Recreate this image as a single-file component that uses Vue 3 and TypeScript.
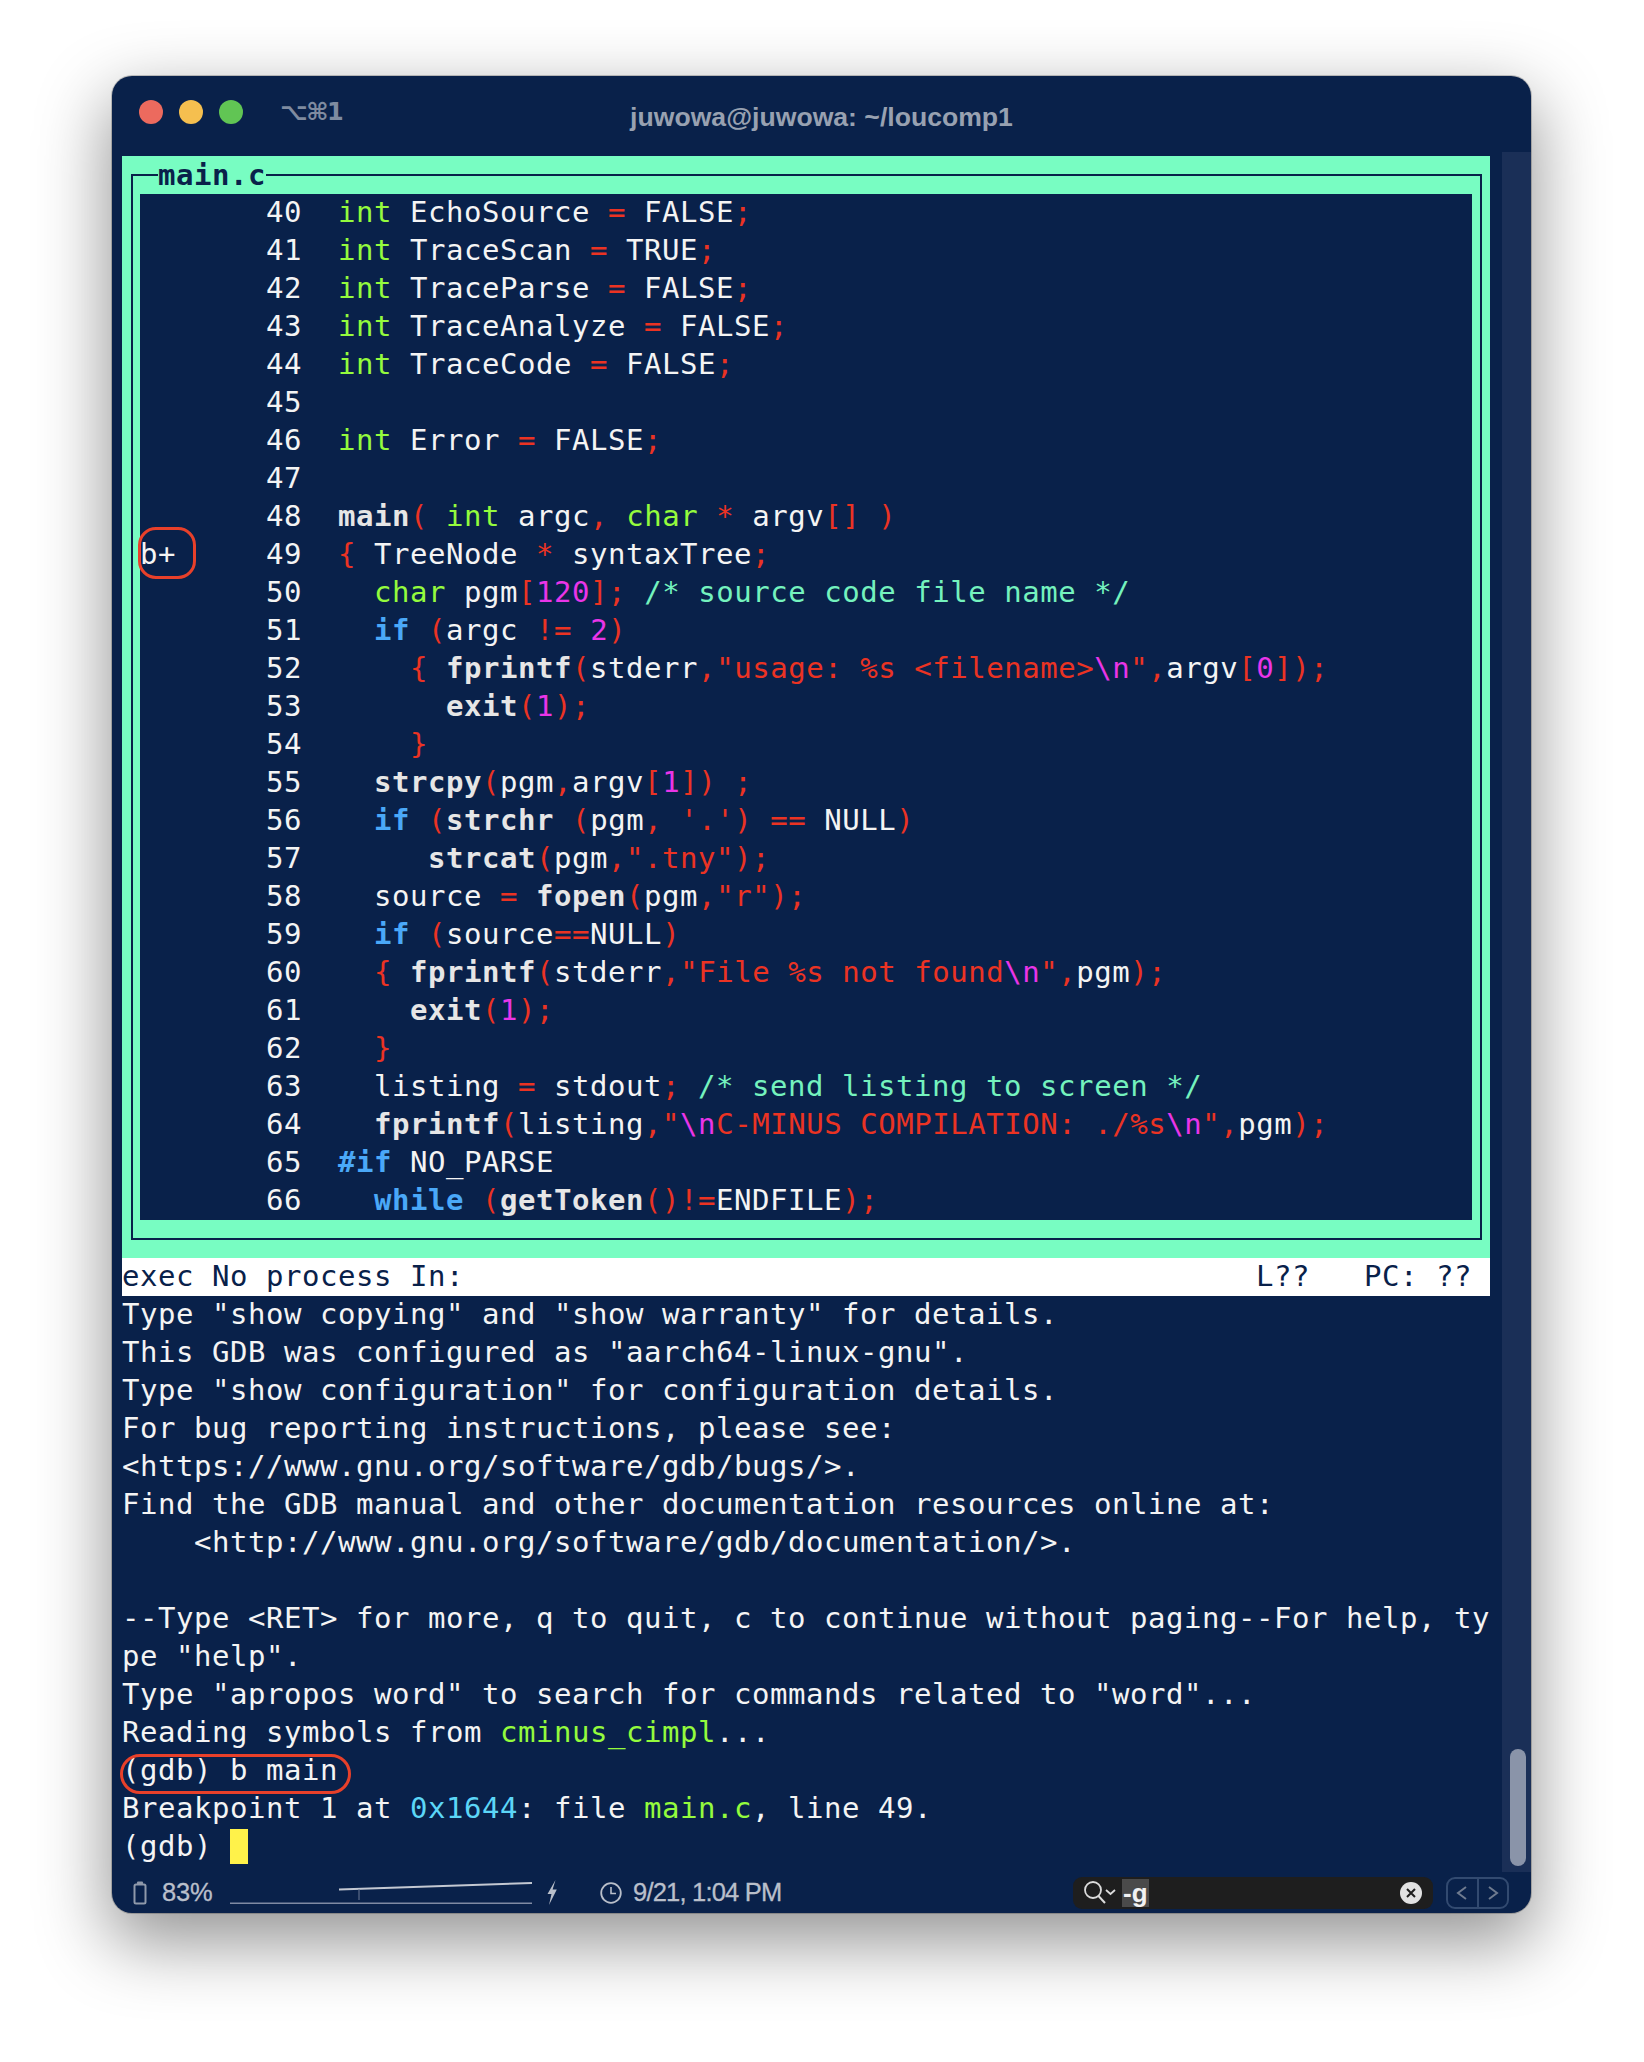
<script setup lang="ts">
type Token = { cls: string; text: string };

function parse(line: string): Token[] {
  const out: Token[] = [];
  const re = /«(\w):(.*?)»/g;
  let last = 0;
  let m: RegExpExecArray | null;
  while ((m = re.exec(line))) {
    if (m.index > last) out.push({ cls: "", text: line.slice(last, m.index) });
    out.push({ cls: "t-" + m[1], text: m[2] });
    last = m.index + m[0].length;
  }
  if (last < line.length) out.push({ cls: "", text: line.slice(last) });
  return out;
}

const source: string[] = [
  "       40  «g:int» EchoSource «r:=» FALSE«r:;»",
  "       41  «g:int» TraceScan «r:=» TRUE«r:;»",
  "       42  «g:int» TraceParse «r:=» FALSE«r:;»",
  "       43  «g:int» TraceAnalyze «r:=» FALSE«r:;»",
  "       44  «g:int» TraceCode «r:=» FALSE«r:;»",
  "       45  ",
  "       46  «g:int» Error «r:=» FALSE«r:;»",
  "       47  ",
  "       48  «f:main»«r:(» «g:int» argc«r:,» «g:char» «r:*» argv«r:[]» «r:)»",
  "b+     49  «r:{» TreeNode «r:*» syntaxTree«r:;»",
  "       50    «g:char» pgm«r:[»«m:120»«r:];» «c:/* source code file name */»",
  "       51    «b:if» «r:(»argc «r:!=» «m:2»«r:)»",
  "       52      «r:{» «f:fprintf»«r:(»stderr«r:,»«r:\"usage: %s <filename>»«m:\\n»«r:\"»«r:,»argv«r:[»«m:0»«r:]);»",
  "       53        «f:exit»«r:(»«m:1»«r:);»",
  "       54      «r:}»",
  "       55    «f:strcpy»«r:(»pgm«r:,»argv«r:[»«m:1»«r:])» «r:;»",
  "       56    «b:if» «r:(»«f:strchr» «r:(»pgm«r:,» «r:'.'»«r:)» «r:==» NULL«r:)»",
  "       57       «f:strcat»«r:(»pgm«r:,»«r:\".tny\"»«r:);»",
  "       58    source «r:=» «f:fopen»«r:(»pgm«r:,»«r:\"r\"»«r:);»",
  "       59    «b:if» «r:(»source«r:==»NULL«r:)»",
  "       60    «r:{» «f:fprintf»«r:(»stderr«r:,»«r:\"File %s not found»«m:\\n»«r:\"»«r:,»pgm«r:);»",
  "       61      «f:exit»«r:(»«m:1»«r:);»",
  "       62    «r:}»",
  "       63    listing «r:=» stdout«r:;» «c:/* send listing to screen */»",
  "       64    «f:fprintf»«r:(»listing«r:,»«r:\"»«m:\\n»«r:C-MINUS COMPILATION: ./%s»«m:\\n»«r:\"»«r:,»pgm«r:);»",
  "       65  «b:#if» NO_PARSE",
  "       66    «b:while» «r:(»«f:getToken»«r:()!=»ENDFILE«r:);»",
];

const gdb: string[] = [
  'Type "show copying" and "show warranty" for details.',
  'This GDB was configured as "aarch64-linux-gnu".',
  'Type "show configuration" for configuration details.',
  "For bug reporting instructions, please see:",
  "<https://www.gnu.org/software/gdb/bugs/>.",
  "Find the GDB manual and other documentation resources online at:",
  "    <http://www.gnu.org/software/gdb/documentation/>.",
  "",
  "--Type <RET> for more, q to quit, c to continue without paging--For help, ty",
  'pe "help".',
  'Type "apropos word" to search for commands related to "word"...',
  "Reading symbols from «g:cminus_cimpl»...",
  "(gdb) b main",
  "Breakpoint 1 at «y:0x1644»: file «g:main.c», line 49.",
  "(gdb) ",
];

const sourceRows = source.map(parse);
const gdbRows = gdb.map(parse);
const statusLeft = "exec No process In:";
const statusRight = "L??   PC: ??";
</script>

<template>
  <div class="page">
    <div class="window">
      <header class="titlebar">
        <div class="lights">
          <span class="light red"></span>
          <span class="light yellow"></span>
          <span class="light green"></span>
          <span class="shortcut">⌥⌘1</span>
        </div>
        <div class="title">juwowa@juwowa: ~/loucomp1</div>
        <div></div>
      </header>

      <div class="main">
        <div class="terminal">
          <section class="tui">
            <div class="frame"></div>
            <div class="frame-title">main.c</div>
            <div class="src">
              <div v-for="(row, i) in sourceRows" :key="i" class="row">
                <span v-for="(t, j) in row" :key="j" :class="t.cls">{{ t.text }}</span>
                <i v-if="i === 9" class="mark mark-bp"></i>
              </div>
            </div>
          </section>
          <div class="status row">
            <span>{{ statusLeft }}</span>
            <span>{{ statusRight }}</span>
          </div>
          <div class="gdb">
            <div v-for="(row, i) in gdbRows" :key="i" class="row">
              <span v-for="(t, j) in row" :key="j" :class="t.cls">{{ t.text }}</span>
              <i v-if="i === 12" class="mark mark-cmd"></i>
              <b v-if="i === 14" class="cursor"></b>
            </div>
          </div>
        </div>
        <div class="scrollbar"><div class="thumb"></div></div>
      </div>

      <footer class="bar">
        <svg class="battery" width="14" height="24" viewBox="0 0 14 24">
          <rect x="4" y="0.5" width="6" height="3" rx="1" fill="#8f99aa" />
          <rect x="1.5" y="3.5" width="11" height="19" rx="1.5" fill="none" stroke="#8f99aa" stroke-width="2" />
        </svg>
        <span class="bar-text pct">83%</span>
        <svg class="spark" width="302" height="24" viewBox="0 0 302 24">
          <path d="M0 22.2H302" stroke="#7f8aa3" stroke-width="1.6" fill="none" />
          <path d="M109 8.5L302 2" stroke="#c3c8d2" stroke-width="2" fill="none" />
          <path d="M129 8V19" stroke="#6d7b95" stroke-width="1" fill="none" />
        </svg>
        <svg class="bolt" width="10" height="25" viewBox="0 0 10 25">
          <path d="M8.5 0L0.5 14H4.5L2 25L9.8 9.5H5.6Z" fill="#b9bfca" />
        </svg>
        <svg class="clock" width="22" height="22" viewBox="0 0 22 22">
          <circle cx="11" cy="11" r="9.8" fill="none" stroke="#b9bfca" stroke-width="1.8" />
          <path d="M11 5V11.5H16" fill="none" stroke="#b9bfca" stroke-width="1.6" />
        </svg>
        <span class="bar-text time">9/21, 1:04 PM</span>

        <div class="search">
          <svg class="lens" width="40" height="28" viewBox="0 0 40 28">
            <circle cx="14" cy="11" r="8" fill="none" stroke="#dcdcdc" stroke-width="1.8" />
            <path d="M19.5 17L26 24" stroke="#dcdcdc" stroke-width="2" fill="none" />
            <path d="M27 11L31.5 15L36 11" stroke="#dcdcdc" stroke-width="1.8" fill="none" />
          </svg>
          <span class="query">-g</span>
          <span class="clear">
            <svg width="22" height="22" viewBox="0 0 22 22">
              <circle cx="11" cy="11" r="11" fill="#e2e2e2" />
              <path d="M7 7L15 15M15 7L7 15" stroke="#1e1e1e" stroke-width="2" fill="none" />
            </svg>
          </span>
        </div>

        <div class="nav">
          <span class="nav-btn">
            <svg width="12" height="16" viewBox="0 0 12 16"><path d="M10 2L2 8L10 14" fill="none" stroke="#6f7b8f" stroke-width="2" /></svg>
          </span>
          <span class="nav-btn">
            <svg width="12" height="16" viewBox="0 0 12 16"><path d="M2 2L10 8L2 14" fill="none" stroke="#6f7b8f" stroke-width="2" /></svg>
          </span>
        </div>
      </footer>
    </div>
  </div>
</template>

<style>
html,
body {
  margin: 0;
  background: #ffffff;
}
</style>

<style scoped>
.page {
  width: 1644px;
  height: 2062px;
  box-sizing: border-box;
  padding: 76px 0 0 112px;
  overflow: hidden;
  background: #ffffff;
}

.window {
  width: 1419px;
  height: 1837px;
  display: flex;
  flex-direction: column;
  background: #09214a;
  border-radius: 20px;
  overflow: hidden;
  box-shadow: 0 26px 70px 4px rgba(0, 0, 0, 0.42), 0 0 0 1px rgba(0, 0, 0, 0.2);
}

.titlebar {
  height: 76px;
  flex: none;
  display: grid;
  grid-template-columns: 1fr auto 1fr;
  align-items: center;
}

.lights {
  display: flex;
  align-items: center;
  gap: 16px;
  padding-left: 27px;
  margin-top: -4px;
}

.light {
  width: 24px;
  height: 24px;
  border-radius: 50%;
}
.red { background: #ec6a5e; }
.yellow { background: #f5bf4f; }
.green { background: #61c554; }

.shortcut {
  margin-left: 21px;
  font: bold 24px "DejaVu Sans", sans-serif;
  color: #7f8ba0;
  letter-spacing: -1.5px;
}

.title {
  font: bold 26.6px "Liberation Sans", sans-serif;
  color: #98a1b1;
  padding-top: 6px;
}

.main {
  display: flex;
  flex: none;
  height: 1720px;
  padding-left: 10px;
  gap: 12px;
}

.terminal {
  width: 1368px;
  padding-top: 4px;
  flex: none;
  font-family: "DejaVu Sans Mono", monospace;
  font-size: 29px;
  letter-spacing: 0.542px;
  color: #f4f4f4;
}

.row {
  position: relative;
  height: 38px;
  line-height: 36px;
  white-space: pre;
}

.tui {
  position: relative;
  background: #78fdc2;
  padding: 38px 18px;
}

.frame {
  position: absolute;
  inset: 18px 8px 18px 9px;
  border: 2px solid #09214a;
}

.frame-title {
  position: absolute;
  top: 0;
  left: 36px;
  height: 38px;
  line-height: 38px;
  font-weight: bold;
  color: #09214a;
  background: #78fdc2;
}

.src {
  position: relative;
  background: #09214a;
}

.status {
  display: flex;
  justify-content: space-between;
  background: #ffffff;
  color: #09214a;
  padding-right: 18px;
}

.t-g { color: #94fb3d; }
.t-r { color: #eb3323; }
.t-m { color: #e935e8; }
.t-b { color: #4aa8f8; font-weight: bold; }
.t-f { color: #e6e6e6; font-weight: bold; }
.t-c { color: #74f2be; }
.t-y { color: #5cd6f7; }

.mark {
  position: absolute;
  box-sizing: border-box;
  border: 3px solid #e8402a;
}

.mark-bp {
  left: -2px;
  top: -9px;
  width: 58px;
  height: 52px;
  border-radius: 18px;
}

.mark-cmd {
  left: -2px;
  top: 2px;
  width: 231px;
  height: 40px;
  border-radius: 20px;
}

.cursor {
  display: inline-block;
  width: 18px;
  height: 35px;
  vertical-align: top;
  margin-top: 1px;
  background: #fff24a;
}

.scrollbar {
  flex: 1;
  box-sizing: border-box;
  display: flex;
  flex-direction: column;
  justify-content: flex-end;
  padding: 0 5px 6px 8px;
  background: #1a2f57;
}

.thumb {
  height: 117px;
  border-radius: 8px;
  background: #8a94a9;
}

.bar {
  flex: 1;
  display: flex;
  align-items: center;
  padding: 0 22px 0 21px;
}

.bar-text {
  font: 25.5px "Liberation Sans", sans-serif;
  color: #b9bfca;
  letter-spacing: -0.2px;
  -webkit-text-stroke: 0.3px #b9bfca;
}

.pct {
  width: 53px;
  margin-left: 15px;
}

.spark {
  margin-left: 15px;
}

.bolt {
  margin-left: 15px;
}

.clock {
  margin-left: 43px;
}

.time {
  margin-left: 11px;
  letter-spacing: -0.8px;
}

.search {
  margin-left: auto;
  width: 360px;
  height: 32px;
  box-sizing: border-box;
  display: flex;
  align-items: center;
  padding: 0 11px 0 6px;
  border-radius: 9px;
  background: #1e1e1e;
}

.lens {
  flex: none;
}

.query {
  margin-left: 3px;
  height: 28px;
  padding: 0 1px;
  background: #4a4a4a;
  color: #f2f2f2;
  font: bold 26px/28px "Liberation Sans", sans-serif;
}

.clear {
  margin-left: auto;
  display: flex;
}

.nav {
  margin-left: 13px;
  width: 63px;
  height: 32px;
  box-sizing: border-box;
  display: flex;
  border: 2px solid #324a70;
  border-radius: 9px;
}

.nav-btn {
  flex: 1;
  display: flex;
  align-items: center;
  justify-content: center;
}

.nav-btn + .nav-btn {
  border-left: 2px solid #324a70;
}
</style>
